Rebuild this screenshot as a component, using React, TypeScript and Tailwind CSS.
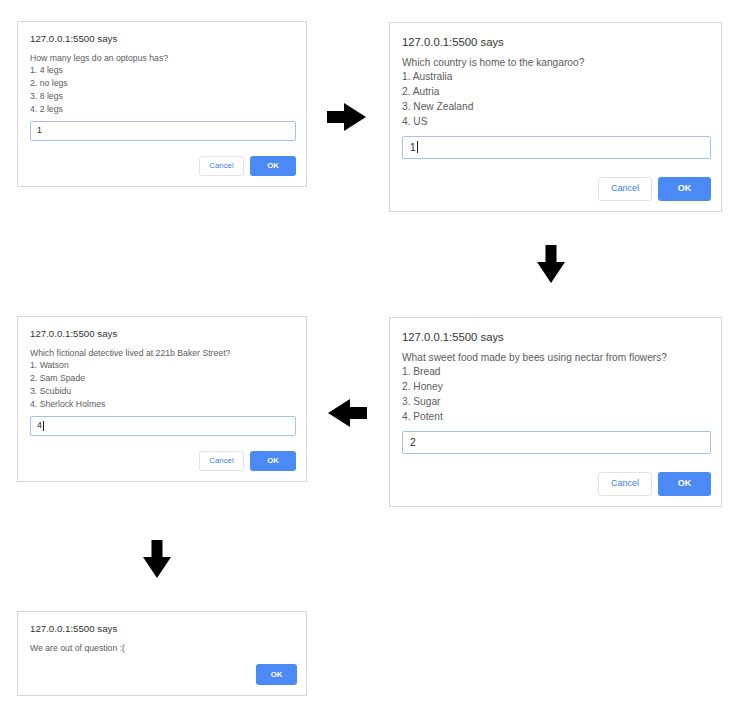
import type { ReactNode } from 'react';

type Size = 'sm' | 'lg';

type PromptProps = {
	size: Size;
	question: string;
	options?: string[];
	value?: string;
	caret?: boolean;
	alert?: boolean;
	className?: string;
};

const styles = {
	sm: {
		box: 'w-[290px] pt-[11px] pb-[10px] pl-[12px] pr-[10px]',
		title: 'text-[9.7px] leading-[12px]',
		body: 'mt-[6.5px] text-[8.7px] leading-[12.75px]',
		input: 'mt-[5.5px] h-[20px] text-[8.7px] pl-[6px]',
		caret: 'h-[10px]',
		buttons: 'mt-[15px] gap-[6px]',
		cancel: 'h-[20px] w-[45px] text-[7.8px]',
		ok: 'h-[20px] w-[46px] text-[7.8px]'
	},
	lg: {
		box: 'w-[333px] pt-[11.5px] pb-[10px] pl-[12px] pr-[10px]',
		title: 'text-[11.3px] leading-[14px]',
		body: 'mt-[7px] text-[10.2px] leading-[14.8px]',
		input: 'mt-[6.4px] h-[23px] text-[10.2px] pl-[7px]',
		caret: 'h-[12px]',
		buttons: 'mt-[18px] gap-[6px]',
		cancel: 'h-[24px] w-[54px] text-[9px]',
		ok: 'h-[24px] w-[53px] text-[9px]'
	}
};

function Prompt({ size, question, options = [], value, caret, alert, className = '' }: PromptProps) {
	const s = styles[size];
	return (
		<div className={`flex flex-col border border-[#d7d7d7] bg-white ${s.box} ${className}`}>
			<p className={`text-[#333333] ${s.title}`}>127.0.0.1:5500 says</p>
			<div className={`text-[#5c5c5c] ${s.body}`}>
				<p>{question}</p>
				{options.map((opt, i) => (
					<p key={opt}>{`${i + 1}. ${opt}`}</p>
				))}
			</div>

			{!alert && (
				<div
					className={`flex items-center rounded-[2px] border border-[#a3c2f3] text-[#1f1f1f] ${s.input}`}
				>
					<span>{value}</span>
					{caret && <span className={`ml-px w-px bg-[#1f1f1f] ${s.caret}`} />}
				</div>
			)}

			<div className={`flex justify-end ${alert ? 'mt-[9.6px] mr-[-1px]' : s.buttons}`}>
				{!alert && (
					<button
						type="button"
						className={`flex items-center justify-center rounded-[3px] border border-[#e2e2e2] bg-white font-medium text-[#3d7be3] ${s.cancel}`}
					>
						Cancel
					</button>
				)}
				<button
					type="button"
					className={`flex items-center justify-center rounded-[3px] bg-[#4b8af4] font-semibold text-white ${
						alert ? 'h-[21px] w-[41px] text-[7.8px]' : s.ok
					}`}
				>
					OK
				</button>
			</div>
		</div>
	);
}

function Arrow({ dir, className = '' }: { dir: 'right' | 'left' | 'down'; className?: string }) {
	let shape: ReactNode;
	if (dir === 'down') {
		shape = (
			<svg width="28" height="38" viewBox="0 0 28 38" className={className}>
				<polygon points="8.5,0 19.5,0 19.5,17 28,17 14,38 0,17 8.5,17" fill="#000" />
			</svg>
		);
	} else if (dir === 'right') {
		shape = (
			<svg width="39" height="28" viewBox="0 0 39 28" className={className}>
				<polygon points="0,8 17,8 17,0 39,14 17,28 17,20 0,20" fill="#000" />
			</svg>
		);
	} else {
		shape = (
			<svg width="39" height="28" viewBox="0 0 39 28" className={className}>
				<polygon points="39,8 22,8 22,0 0,14 22,28 22,20 39,20" fill="#000" />
			</svg>
		);
	}
	return shape;
}

export default function App() {
	return (
		<div className="min-h-[716px] w-[741px] bg-white pl-[17px] pt-[21px] font-['Liberation_Sans',Arial,sans-serif]">
			<div className="grid grid-cols-[290px_82px_333px] items-start">
				{/* row 1 */}
				<Prompt
					size="sm"
					question="How many legs do an optopus has?"
					options={['4 legs', 'no legs', '8 legs', '2 legs']}
					value="1"
				/>
				<div className="flex h-[191px] items-center pl-[20px]">
					<Arrow dir="right" />
				</div>
				<Prompt
					size="lg"
					className="mt-px"
					question="Which country is home to the kangaroo?"
					options={['Australia', 'Autria', 'New Zealand', 'US']}
					value="1"
					caret
				/>

				{/* down arrow on the right */}
				<div className="col-start-3 flex pl-[148px] pt-[33px] pb-[34px]">
					<Arrow dir="down" />
				</div>

				{/* row 2 */}
				<Prompt
					size="lg"
					className="col-start-3 row-start-3"
					question="What sweet food made by bees using nectar from flowers?"
					options={['Bread', 'Honey', 'Sugar', 'Potent']}
					value="2"
				/>
				<Prompt
					size="sm"
					className="col-start-1 row-start-3 mt-[-1px]"
					question="Which fictional detective lived at 221b Baker Street?"
					options={['Watson', 'Sam Spade', 'Scubidu', 'Sherlock Holmes']}
					value="4"
					caret
				/>
				<div className="col-start-2 row-start-3 flex h-[191px] items-center pl-[21px]">
					<Arrow dir="left" />
				</div>

				{/* down arrow on the left */}
				<div className="col-start-1 flex pl-[126px] pt-[32px] pb-[33px]">
					<Arrow dir="down" />
				</div>

				{/* row 3 */}
				<Prompt size="sm" className="col-start-1" question="We are out of question :(" alert />
			</div>
		</div>
	);
}
